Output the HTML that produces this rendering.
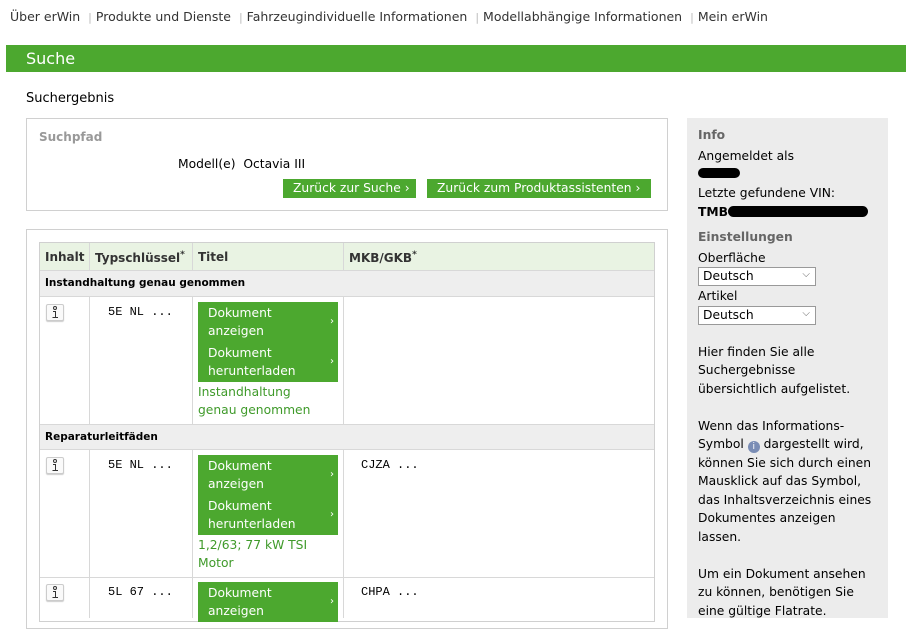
<!DOCTYPE html>
<html><head><meta charset="utf-8"><style>
*{margin:0;padding:0;box-sizing:border-box}
body{width:910px;height:613px;overflow:hidden;background:#fff;font-family:"DejaVu Sans","Liberation Sans",sans-serif;font-size:12.3px;color:#000;position:relative}
.a{position:absolute}
.nav{left:10px;top:9px;color:#333;white-space:nowrap;font-size:12.5px}
.nav .s{color:#bbb;margin:0 4px;font-size:11px}
.bar{left:6px;top:45px;width:900px;height:27px;background:#4ca82f;color:#fff;font-size:16px;padding:4px 0 0 20px}
.box{border:1px solid #d0d0d0}
.gbtn{background:#4ca82f;color:#fff;white-space:nowrap}
.mono{font-family:"Liberation Mono",monospace;font-size:12px}
.hd{background:#e9f3e3;font-weight:bold;color:#333;font-size:12px}
.grp{background:#eee;font-weight:bold;font-size:10.5px}
.cell{border-right:1px solid #d8d8d8}
.ico{width:18px;height:17px;border:1px solid #ccc;border-radius:2px;background:#fafafa;box-shadow:0 1px 1px #ccc}
.ico svg{display:block;margin:1px auto 0}
.doc{left:198px;width:140px;background:#4ca82f;color:#fff;line-height:18px}
.doc div{height:40px;padding:2px 0 0 10px;position:relative}
.doc div span{position:absolute;right:4px;top:11px;font-size:10px}
.side{left:687px;top:118px;width:201px;height:500px;background:#ececec;padding:8px 11px;line-height:18.5px}
.side b.t{color:#666}
.sel{width:118px;height:19px;border:1px solid #999;background:#fff;padding:0 4px;line-height:17px;position:relative}
.sel:after{content:"⌵";position:absolute;right:5px;top:-2px;font-size:10px;color:#666}
.lnk{color:#3f9a2a}
</style></head><body>
<div class="a nav">Über erWin <span class="s">|</span>Produkte und Dienste <span class="s">|</span>Fahrzeugindividuelle Informationen <span class="s">|</span>Modellabhängige Informationen <span class="s">|</span>Mein erWin</div>
<div class="a bar">Suche</div>
<div class="a" style="left:26px;top:91px;font-size:13px">Suchergebnis</div>

<div class="a box" style="left:26px;top:118px;width:642px;height:93px"></div>
<div class="a" style="left:39px;top:130px;font-weight:bold;color:#999;font-size:12px">Suchpfad</div>
<div class="a" style="left:178px;top:157px">Modell(e)&nbsp; Octavia III</div>
<div class="a gbtn" style="left:283px;top:179px;width:133px;height:19px;padding:2px 0 0 10px">Zurück zur Suche ›</div>
<div class="a gbtn" style="left:427px;top:179px;width:224px;height:19px;padding:2px 0 0 10px">Zurück zum Produktassistenten ›</div>

<div class="a box" style="left:26px;top:229px;width:642px;height:400px"></div>
<div class="a box" style="left:39px;top:242px;width:616px;height:380px"></div>
<div class="a hd" style="left:40px;top:243px;width:614px;height:28px;border-bottom:1px solid #d8d8d8"></div>
<div class="a cell" style="left:40px;top:243px;width:50px;height:28px"></div>
<div class="a cell" style="left:90px;top:243px;width:103px;height:28px"></div>
<div class="a cell" style="left:193px;top:243px;width:151px;height:28px"></div>
<div class="a hd" style="left:45px;top:250px;background:none">Inhalt</div>
<div class="a hd" style="left:95px;top:250px;background:none">Typschlüssel<sup style="font-size:9px">*</sup></div>
<div class="a hd" style="left:198px;top:250px;background:none">Titel</div>
<div class="a hd" style="left:349px;top:250px;background:none">MKB/GKB<sup style="font-size:9px">*</sup></div>

<div class="a grp" style="left:40px;top:271px;width:614px;height:26px;padding:6px 0 0 5px;border-bottom:1px solid #d8d8d8">Instandhaltung genau genommen</div>
<div class="a cell" style="left:40px;top:297px;width:50px;height:127px"></div>
<div class="a cell" style="left:90px;top:297px;width:103px;height:127px"></div>
<div class="a cell" style="left:193px;top:297px;width:151px;height:127px"></div>
<div class="a ico" style="left:46px;top:304px"><svg width="10" height="13" viewBox="0 0 10 13" fill="none" stroke="#333" stroke-width="1"><circle cx="5" cy="2" r="1.5"/><path d="M3 5.5H5.5V11.5M2.5 11.5H8"/></svg></div>
<div class="a mono" style="left:108px;top:305px">5E NL ...</div>
<div class="a doc" style="top:302px"><div>Dokument<br>anzeigen<span>›</span></div><div>Dokument<br>herunterladen<span>›</span></div></div>
<div class="a lnk" style="left:198px;top:383px;line-height:18px">Instandhaltung<br>genau genommen</div>

<div class="a grp" style="left:40px;top:424px;width:614px;height:26px;padding:6px 0 0 5px;border-top:1px solid #d8d8d8;border-bottom:1px solid #d8d8d8">Reparaturleitfäden</div>
<div class="a cell" style="left:40px;top:450px;width:50px;height:127px"></div>
<div class="a cell" style="left:90px;top:450px;width:103px;height:127px"></div>
<div class="a cell" style="left:193px;top:450px;width:151px;height:127px"></div>
<div class="a ico" style="left:46px;top:457px"><svg width="10" height="13" viewBox="0 0 10 13" fill="none" stroke="#333" stroke-width="1"><circle cx="5" cy="2" r="1.5"/><path d="M3 5.5H5.5V11.5M2.5 11.5H8"/></svg></div>
<div class="a mono" style="left:108px;top:458px">5E NL ...</div>
<div class="a mono" style="left:361px;top:458px">CJZA ...</div>
<div class="a doc" style="top:455px"><div>Dokument<br>anzeigen<span>›</span></div><div>Dokument<br>herunterladen<span>›</span></div></div>
<div class="a lnk" style="left:198px;top:536px;line-height:18px">1,2/63; 77 kW TSI<br>Motor</div>

<div class="a" style="left:40px;top:577px;width:614px;border-top:1px solid #d8d8d8"></div>
<div class="a cell" style="left:40px;top:578px;width:50px;height:40px"></div>
<div class="a cell" style="left:90px;top:578px;width:103px;height:40px"></div>
<div class="a cell" style="left:193px;top:578px;width:151px;height:40px"></div>
<div class="a ico" style="left:46px;top:584px"><svg width="10" height="13" viewBox="0 0 10 13" fill="none" stroke="#333" stroke-width="1"><circle cx="5" cy="2" r="1.5"/><path d="M3 5.5H5.5V11.5M2.5 11.5H8"/></svg></div>
<div class="a mono" style="left:108px;top:585px">5L 67 ...</div>
<div class="a mono" style="left:361px;top:585px">CHPA ...</div>
<div class="a doc" style="top:582px"><div>Dokument<br>anzeigen<span>›</span></div></div>

<div class="a side">
<b class="t">Info</b><br>
<div style="margin-top:2px">Angemeldet als</div>
<div style="width:42px;height:10px;background:#000;border-radius:5px;margin:3px 0 6px"></div>
Letzte gefundene VIN:<br>
<b>TMB</b><span style="display:inline-block;width:140px;height:11px;background:#000;border-radius:6px;vertical-align:-1px"></span><br>
<div style="height:7px"></div>
<b class="t">Einstellungen</b><br>
<div style="margin-top:2px">Oberfläche</div>
<div class="sel">Deutsch</div>
<div style="margin-top:1px">Artikel</div>
<div class="sel">Deutsch</div>
<div style="height:18px"></div>
Hier finden Sie alle<br>Suchergebnisse<br>übersichtlich aufgelistet.<br><br>
Wenn das Informations-<br>Symbol <span style="display:inline-block;width:12px;height:12px;border-radius:6px;background:#7a8db5;color:#fff;font-size:9px;line-height:12px;text-align:center;vertical-align:-1px">i</span> dargestellt wird,<br>können Sie sich durch einen<br>Mausklick auf das Symbol,<br>das Inhaltsverzeichnis eines<br>Dokumentes anzeigen<br>lassen.<br><br>
Um ein Dokument ansehen<br>zu können, benötigen Sie<br>eine gültige Flatrate.
</div>
</body></html>
